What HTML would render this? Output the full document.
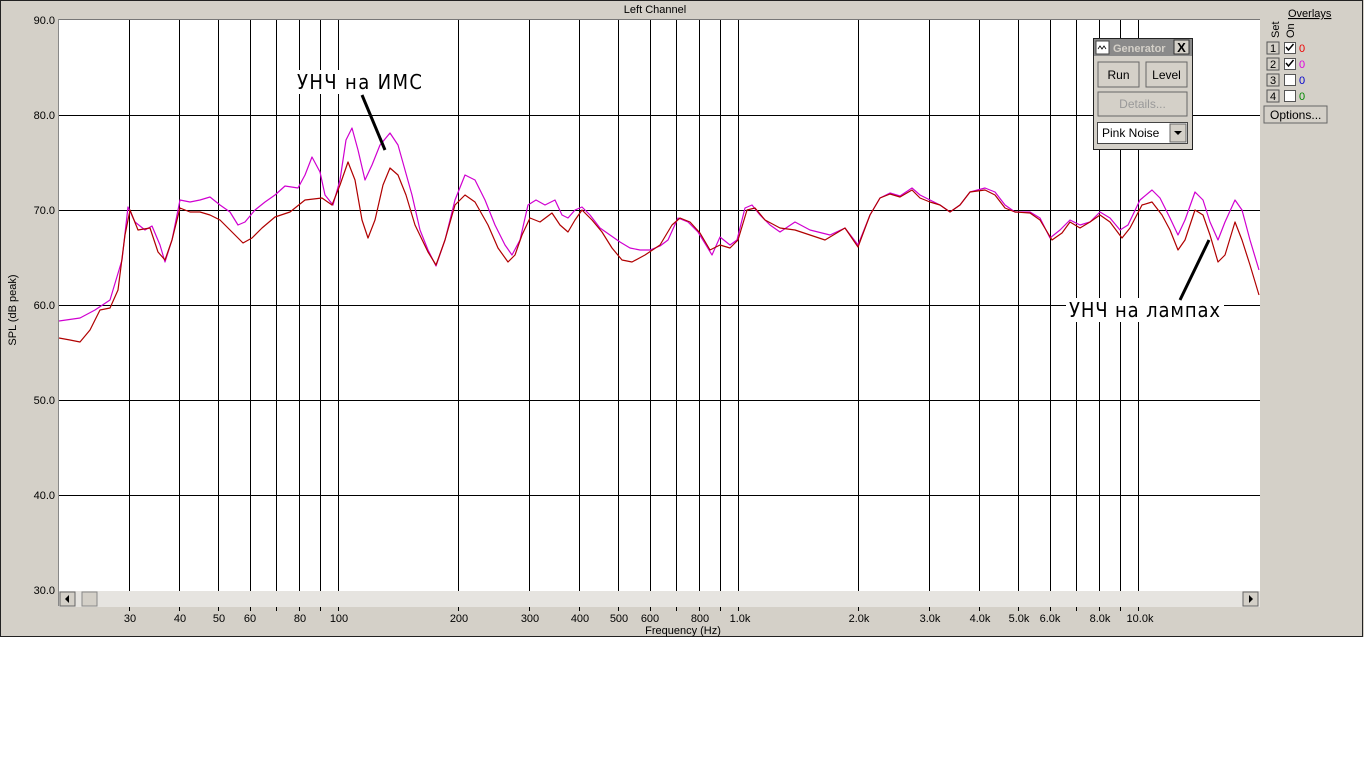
<!DOCTYPE html>
<html><head><meta charset="utf-8"><style>
html,body{margin:0;padding:0;background:#fff;width:1364px;height:758px;overflow:hidden}
svg{display:block}
text{font-family:"Liberation Sans",sans-serif}
</style></head><body>
<svg width="1364" height="758" xmlns="http://www.w3.org/2000/svg">
<rect x="0" y="0" width="1364" height="637" fill="#d4d0c8"/>
<rect x="0.5" y="0.5" width="1362" height="636" fill="none" stroke="#222"/>
<text x="655" y="13" font-size="11" text-anchor="middle">Left Channel</text>
<rect x="59" y="20" width="1201" height="571" fill="#fff"/>
<line x1="58" y1="19.5" x2="1260" y2="19.5" stroke="#777"/>
<line x1="58.5" y1="19" x2="58.5" y2="606" stroke="#888"/>
<g stroke="#000" stroke-width="1">
<line x1="59" y1="115.5" x2="1260" y2="115.5"/>
<line x1="59" y1="210.5" x2="1260" y2="210.5"/>
<line x1="59" y1="305.5" x2="1260" y2="305.5"/>
<line x1="59" y1="400.5" x2="1260" y2="400.5"/>
<line x1="59" y1="495.5" x2="1260" y2="495.5"/>
<path d="M129.5 20V591M179.5 20V591M218.5 20V591M250.5 20V591M276.5 20V591M299.5 20V591M320.5 20V591M338.5 20V591M458.5 20V591M529.5 20V591M579.5 20V591M618.5 20V591M650.5 20V591M676.5 20V591M699.5 20V591M720.5 20V591M738.5 20V591M858.5 20V591M929.5 20V591M979.5 20V591M1018.5 20V591M1050.5 20V591M1076.5 20V591M1099.5 20V591M1120.5 20V591M1138.5 20V591"/>
<path d="M129.5 607V611M179.5 607V611M218.5 607V611M250.5 607V611M276.5 607V611M299.5 607V611M320.5 607V611M338.5 607V611M458.5 607V611M529.5 607V611M579.5 607V611M618.5 607V611M650.5 607V611M676.5 607V611M699.5 607V611M720.5 607V611M738.5 607V611M858.5 607V611M929.5 607V611M979.5 607V611M1018.5 607V611M1050.5 607V611M1076.5 607V611M1099.5 607V611M1120.5 607V611M1138.5 607V611"/>
</g>
<g font-size="11" text-anchor="end">
<text x="55" y="24">90.0</text><text x="55" y="119">80.0</text><text x="55" y="214">70.0</text><text x="55" y="309">60.0</text><text x="55" y="404">50.0</text><text x="55" y="499">40.0</text><text x="55" y="594">30.0</text>
</g>
<text transform="translate(16,310) rotate(-90)" font-size="11" text-anchor="middle">SPL (dB peak)</text>
<g font-size="11" text-anchor="middle">
<text x="130" y="622">30</text><text x="180" y="622">40</text><text x="219" y="622">50</text><text x="250" y="622">60</text><text x="300" y="622">80</text><text x="339" y="622">100</text><text x="459" y="622">200</text><text x="530" y="622">300</text><text x="580" y="622">400</text><text x="619" y="622">500</text><text x="650" y="622">600</text><text x="700" y="622">800</text><text x="740" y="622">1.0k</text><text x="859" y="622">2.0k</text><text x="930" y="622">3.0k</text><text x="980" y="622">4.0k</text><text x="1019" y="622">5.0k</text><text x="1050" y="622">6.0k</text><text x="1100" y="622">8.0k</text><text x="1140" y="622">10.0k</text>
</g>
<text x="683" y="634" font-size="11" text-anchor="middle">Frequency (Hz)</text>
<rect x="59" y="591" width="1201" height="16" fill="#e6e4e0"/>
<rect x="60" y="592" width="15" height="14" fill="#d4d0c8" stroke="#666"/>
<path d="M65 599l4-4v8z" fill="#000"/>
<rect x="82" y="592" width="15" height="14" fill="#d4d0c8" stroke="#888"/>
<rect x="1243" y="592" width="15" height="14" fill="#d4d0c8" stroke="#666"/>
<path d="M1253 599l-4-4v8z" fill="#000"/>
<polyline fill="none" stroke="#d000d0" stroke-width="1.2" stroke-linejoin="round" points="59,321 80,318 95,310 110,300 122,260 128,207 135,222 145,230 152,226 160,245 165,262 172,240 180,200 190,202 200,200 210,197 220,205 230,212 238,225 245,222 255,210 265,202 275,195 285,186 298,188 305,175 312,157 320,172 325,195 333,205 340,180 346,140 352,128 358,150 365,180 372,165 380,145 390,133 398,145 405,170 412,195 420,230 428,250 436,266 445,240 455,200 465,175 475,180 485,200 495,225 505,245 512,255 520,240 528,205 536,200 545,205 555,200 562,215 568,218 575,210 582,207 590,215 600,228 610,235 620,242 630,248 640,250 650,250 660,246 668,240 678,218 688,222 698,232 706,245 712,255 720,237 730,245 737,240 745,208 752,205 760,215 770,225 780,232 795,222 810,230 830,235 845,228 858,245 870,215 880,198 890,193 900,196 912,188 920,195 930,200 940,205 950,212 960,205 970,192 985,188 995,192 1005,205 1015,212 1030,212 1040,218 1050,238 1060,230 1070,220 1080,225 1090,222 1100,212 1110,218 1120,230 1128,225 1140,200 1152,190 1160,198 1170,218 1178,235 1185,220 1195,192 1203,200 1210,222 1218,240 1225,222 1235,200 1242,210 1250,240 1259,270"/>
<polyline fill="none" stroke="#b00000" stroke-width="1.2" stroke-linejoin="round" points="59,338 70,340 80,342 90,330 100,310 110,308 118,290 125,235 130,210 138,230 150,228 158,252 165,260 172,240 180,208 190,212 200,212 210,215 220,220 232,232 243,243 252,238 262,228 275,217 290,212 305,200 322,198 332,205 340,185 348,162 355,180 362,220 368,238 375,220 383,185 390,168 398,175 406,195 415,225 428,252 436,265 445,240 455,205 465,195 475,202 488,225 498,248 508,262 515,255 522,235 530,218 540,222 552,213 560,225 568,232 575,220 582,210 592,220 602,232 612,248 622,260 632,262 645,255 660,245 672,225 680,218 690,222 700,233 710,250 720,245 730,248 738,240 747,210 755,208 765,220 780,228 795,230 810,235 825,240 845,228 858,247 870,215 880,198 890,194 900,197 912,190 920,198 930,202 940,205 950,212 960,205 970,192 985,190 995,195 1005,208 1015,212 1030,213 1040,220 1052,240 1062,233 1070,222 1080,228 1090,222 1100,215 1110,222 1122,238 1130,228 1142,205 1152,202 1162,215 1170,230 1178,250 1185,240 1195,210 1203,215 1210,235 1218,262 1225,255 1235,222 1242,240 1250,265 1259,295"/>
<rect x="294" y="70" width="132" height="24" fill="#fff"/>
<text x="297" y="89" font-size="20" textLength="125" lengthAdjust="spacing" style="font-family:'DejaVu Sans Condensed','Liberation Sans',sans-serif">УНЧ на ИМС</text>
<line x1="362" y1="95" x2="385" y2="150" stroke="#000" stroke-width="3"/>
<rect x="1066" y="298" width="158" height="24" fill="#fff"/>
<text x="1069" y="317" font-size="20" textLength="151" lengthAdjust="spacing" style="font-family:'DejaVu Sans Condensed','Liberation Sans',sans-serif">УНЧ на лампах</text>
<line x1="1180" y1="300" x2="1209" y2="240" stroke="#000" stroke-width="3"/>
<rect x="1093.5" y="38.5" width="99" height="111" fill="#d4d0c8" stroke="#222"/>
<rect x="1094" y="39" width="98" height="17" fill="#8a8a8a"/>
<rect x="1096" y="41" width="13" height="13" fill="#fff" stroke="#444"/>
<path d="M1098 49l2-3 2 3 2-3 2 3" fill="none" stroke="#000" stroke-width="0.8"/>
<text x="1113" y="52" font-size="11" font-weight="bold" fill="#d4d0c8">Generator</text>
<rect x="1174" y="40" width="15" height="14" fill="#d4d0c8" stroke="#333"/>
<text x="1181.5" y="52" font-size="13" font-weight="bold" text-anchor="middle">X</text>
<rect x="1098" y="62" width="41" height="25" fill="#d4d0c8" stroke="#666"/>
<text x="1118.5" y="79" font-size="12" text-anchor="middle">Run</text>
<rect x="1146" y="62" width="41" height="25" fill="#d4d0c8" stroke="#666"/>
<text x="1166.5" y="79" font-size="12" text-anchor="middle">Level</text>
<rect x="1098" y="92" width="89" height="24" fill="#d4d0c8" stroke="#666"/>
<text x="1142.5" y="108" font-size="12" text-anchor="middle" fill="#999">Details...</text>
<rect x="1097.5" y="122.5" width="90" height="21" fill="#fff" stroke="#444"/>
<text x="1102" y="137" font-size="12">Pink Noise</text>
<rect x="1170" y="124" width="16" height="18" fill="#d4d0c8" stroke="#666"/>
<path d="M1174 131h8l-4 4z" fill="#000"/>
<text x="1288" y="17" font-size="11" text-decoration="underline">Overlays</text>
<text transform="translate(1279,38) rotate(-90)" font-size="11">Set</text>
<text transform="translate(1294,38) rotate(-90)" font-size="11">On</text>
<g font-size="11">
<rect x="1267" y="42" width="12" height="12" fill="#d4d0c8" stroke="#555"/><text x="1270" y="52">1</text>
<rect x="1284.5" y="42.5" width="11" height="11" fill="#fff" stroke="#555"/><path d="M1286 47l2.5 3 5-6" fill="none" stroke="#000" stroke-width="1.5"/><text x="1299" y="52" fill="#e00">0</text>
<rect x="1267" y="58" width="12" height="12" fill="#d4d0c8" stroke="#555"/><text x="1270" y="68">2</text>
<rect x="1284.5" y="58.5" width="11" height="11" fill="#fff" stroke="#555"/><path d="M1286 63l2.5 3 5-6" fill="none" stroke="#000" stroke-width="1.5"/><text x="1299" y="68" fill="#e000e0">0</text>
<rect x="1267" y="74" width="12" height="12" fill="#d4d0c8" stroke="#555"/><text x="1270" y="84">3</text>
<rect x="1284.5" y="74.5" width="11" height="11" fill="#fff" stroke="#555"/><text x="1299" y="84" fill="#00c">0</text>
<rect x="1267" y="90" width="12" height="12" fill="#d4d0c8" stroke="#555"/><text x="1270" y="100">4</text>
<rect x="1284.5" y="90.5" width="11" height="11" fill="#fff" stroke="#555"/><text x="1299" y="100" fill="#080">0</text>
<rect x="1264" y="106" width="63" height="17" fill="#d4d0c8" stroke="#666"/><text x="1270" y="119" font-size="12">Options...</text>
</g>
</svg>
</body></html>
